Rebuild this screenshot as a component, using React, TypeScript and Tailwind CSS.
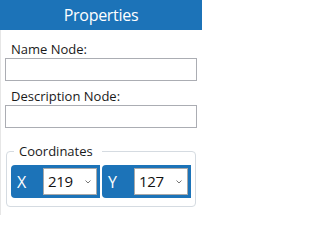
const blue = "bg-[#1c73b8]";

function CoordSelect({ axis, value }: { axis: string; value: string }) {
  return (
    <div className={`flex-1 h-[33px] ${blue} rounded-l-[4px] flex items-center`}>
      <span className="pl-[6px] text-[16px] leading-none text-white">{axis}</span>
      <div className="ml-auto mr-[3px] w-[54px] h-[27px] bg-white border border-[#a9a9a9] flex items-center pl-[4px] pr-[5px]">
        <span className="text-[15px] leading-none text-[#111] tracking-[-0.3px]">{value}</span>
        <svg className="ml-auto" width="6" height="4" viewBox="0 0 6 4">
          <path d="M0.5 0.5 L3 3 L5.5 0.5" fill="none" stroke="#777" strokeWidth="1" />
        </svg>
      </div>
    </div>
  );
}

export default function App() {
  return (
    <div className="w-[202px] h-[215px] bg-white font-['Open_Sans',sans-serif] text-[#1a1a1a] overflow-hidden">
      <div className={`h-[30px] ${blue} flex items-center justify-center text-white text-[16px] tracking-[-0.3px]`}>
        Properties
      </div>
      <div className="h-[185px] border-l border-[#e6e6e6] pl-[4px] pr-[5px] pt-[11px]">
        <label className="block pl-[6px] text-[13px] leading-[17px]">Name Node:</label>
        <div className="h-[23px] border border-[#abadb3] bg-white" />
        <label className="block mt-[7px] pl-[6px] text-[13px] leading-[17px]">Description Node:</label>
        <div className="h-[23px] border border-[#abadb3] bg-white" />
        <fieldset className="mt-[15px] mx-[1px] border border-[#d5dbe1] rounded-[4px] px-[4px] pt-[5px] pb-[8px]">
          <legend className="ml-[3px] pl-[5px] pr-[9px] text-[13px] leading-[17px]">Coordinates</legend>
          <div className="flex gap-[2px]">
            <CoordSelect axis="X" value="219" />
            <CoordSelect axis="Y" value="127" />
          </div>
        </fieldset>
      </div>
    </div>
  );
}
